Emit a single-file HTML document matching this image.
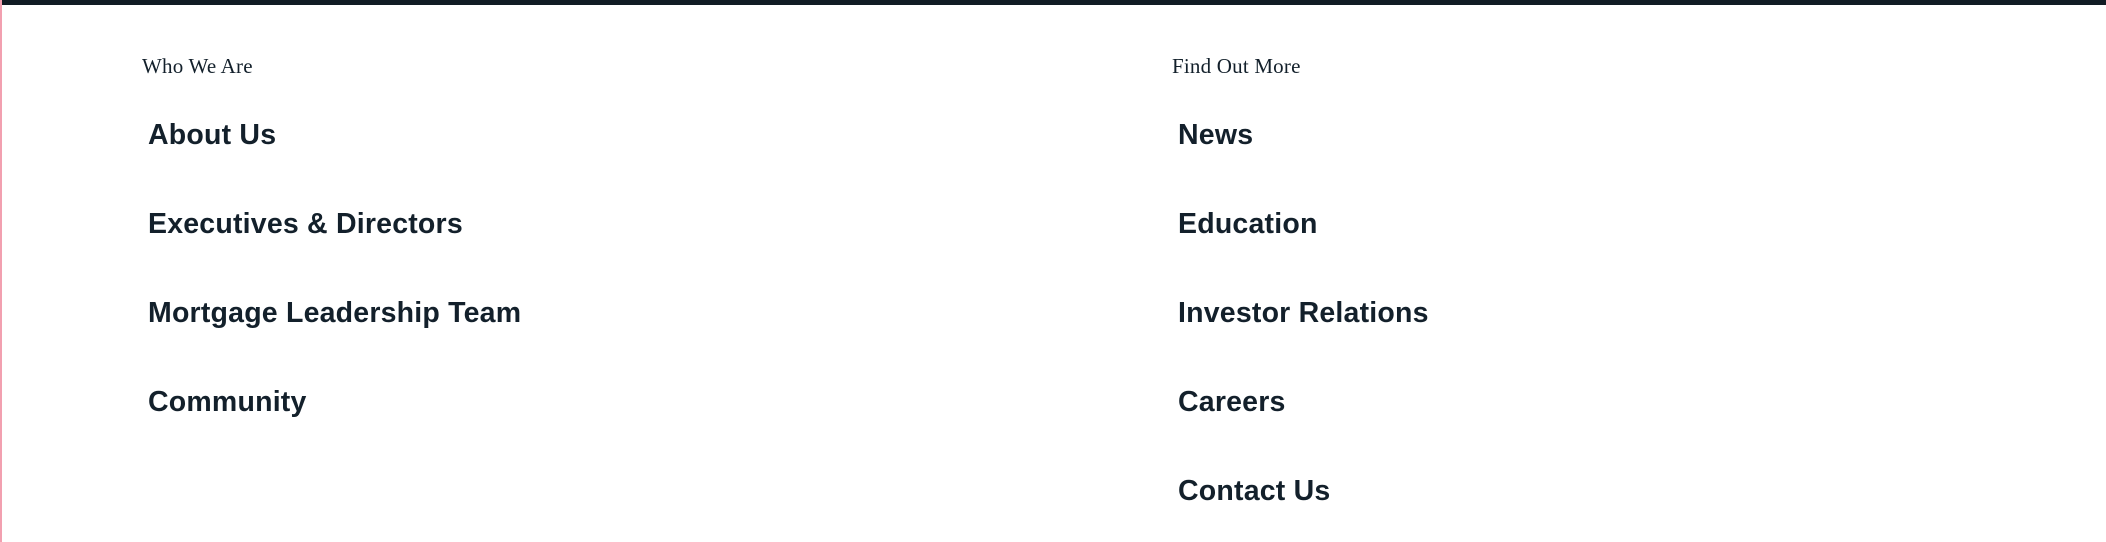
<!DOCTYPE html>
<html><head><style>
html,body{margin:0;padding:0;width:2106px;height:542px;overflow:hidden;background:#fff;}
body{position:relative;font-family:"Liberation Sans",sans-serif;color:#13202b;}
.bar{position:absolute;left:0;top:0;width:2106px;height:5px;background:#111c24;}
.pink{position:absolute;left:0;top:0;width:2px;height:542px;background:#f2a0b0;}
.h{position:absolute;font-family:"Liberation Serif",serif;font-size:21px;letter-spacing:0.2px;line-height:1;}
.l{position:absolute;font-size:28.5px;font-weight:bold;line-height:1;white-space:nowrap;letter-spacing:0.2px;}
</style></head><body>
<div class="bar"></div><div class="pink"></div>
<div class="h" style="left:142px;top:56px">Who We Are</div>
<div class="h" style="left:1172px;top:56px">Find Out More</div>
<div class="l" style="left:148px;top:121px">About Us</div>
<div class="l" style="left:148px;top:210px">Executives &amp; Directors</div>
<div class="l" style="left:148px;top:299px">Mortgage Leadership Team</div>
<div class="l" style="left:148px;top:388px">Community</div>
<div class="l" style="left:1178px;top:121px">News</div>
<div class="l" style="left:1178px;top:210px">Education</div>
<div class="l" style="left:1178px;top:299px">Investor Relations</div>
<div class="l" style="left:1178px;top:388px">Careers</div>
<div class="l" style="left:1178px;top:477px">Contact Us</div>
</body></html>
